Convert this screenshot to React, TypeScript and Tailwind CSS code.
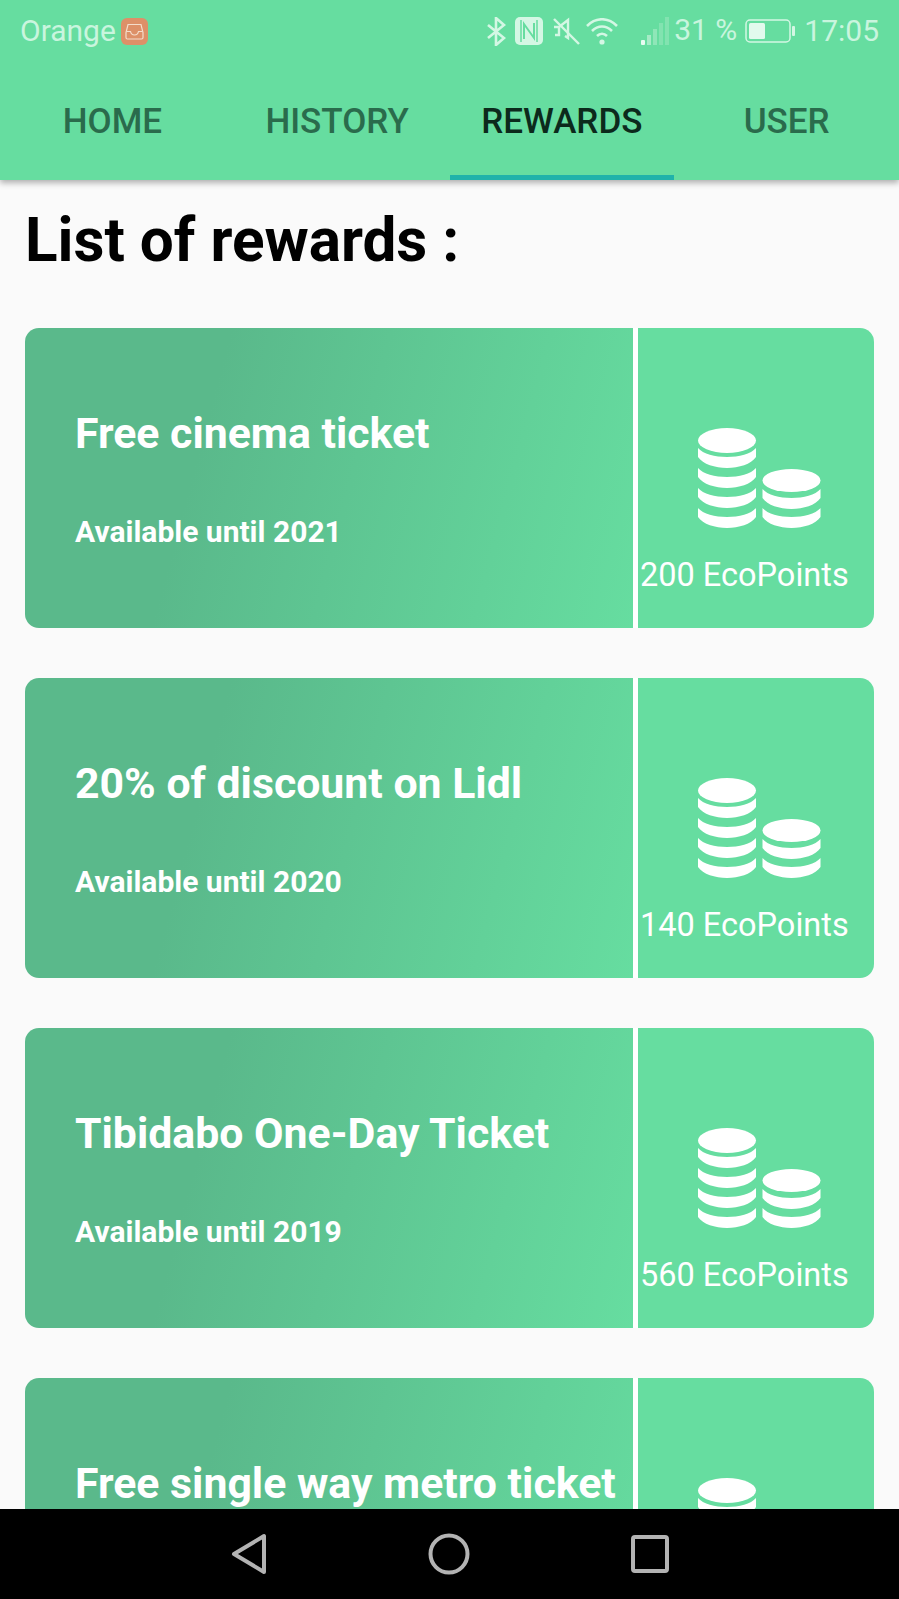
type Reward = { title: string; until?: string; points?: string };

const rewards: Reward[] = [
  { title: "Free cinema ticket", until: "Available until 2021", points: "200 EcoPoints" },
  { title: "20% of discount on Lidl", until: "Available until 2020", points: "140 EcoPoints" },
  { title: "Tibidabo One-Day Ticket", until: "Available until 2019", points: "560 EcoPoints" },
  { title: "Free single way metro ticket" },
];

const tabs = ["HOME", "HISTORY", "REWARDS", "USER"];

function Coins() {
  const stack = (x: number, cy: number, ry: number, bands: number[]) => (
    <g>
      <ellipse cx={x + 29} cy={cy} rx={29} ry={ry} fill="white" />
      {bands.map((y) => (
        <path
          key={y}
          d={`M${x} ${y} C${x + 10} ${y + 12} ${x + 48} ${y + 12} ${x + 58} ${y} V${y + 9} C${x + 48} ${y + 23.500} ${x + 10} ${y + 23.500} ${x} ${y + 9} Z`}
          fill="white"
        />
      ))}
    </g>
  );
  return (
    <svg width="123" height="101" viewBox="0 0 123 101" className="block ml-[6px]" style={{ filter: "blur(0.7px)" }}>
      {stack(0, 12.5, 12.5, [20, 40, 60, 80])}
      {stack(64.5, 52.5, 11.5, [61, 80])}
    </svg>
  );
}

function StatusBar() {
  return (
    <div className="h-[62px] flex items-center justify-between pl-[20px] pr-[20px] text-[30px] text-[#c9f5de] font-['Roboto',sans-serif]">
      <div className="flex items-center gap-[5px]">
        <span className="leading-none">Orange</span>
        <div className="w-[27px] h-[27px] rounded-[6px] bg-[#dd9068] flex items-center justify-center">
          <svg width="19" height="17" viewBox="0 0 19 17" fill="none" stroke="#f4dccb" strokeWidth="1.2">
            <path d="M3 1.5h13l2 8v5a1.5 1.5 0 0 1-1.5 1.5h-14A1.5 1.5 0 0 1 1 14.500v-5z" />
            <path d="M1.500 8.500h4c.5 2.500 2 3.500 4 3.500s3.500-1 4-3.500h4" />
          </svg>
        </div>
      </div>
      <div className="flex items-center">
        <svg width="19" height="29" viewBox="0 0 19 29" fill="none" stroke="#d4f7e4" strokeWidth="2.600" className="mr-[9px]">
          <path d="M1 8l16 13-8 7V1l8 7L1 21" />
        </svg>
        <svg width="28" height="28" viewBox="0 0 28 28" className="mr-[9px]">
          <rect width="28" height="28" rx="5" fill="#d4f7e4" />
          <path d="M9 22V7l10 14V6" fill="none" stroke="#66dda0" strokeWidth="2" />
          <path d="M6 3v22M22 3v22" stroke="#66dda0" strokeWidth="1.500" />
        </svg>
        <svg width="28" height="28" viewBox="0 0 28 28" fill="none" stroke="#d4f7e4" strokeWidth="2.400" className="mr-[6px]">
          <path d="M2 10h5l9-7v18l-3-2M7 10v8H3" />
          <path d="M2 2l25 25" />
        </svg>
        <svg width="32" height="27" viewBox="0 0 32 27" fill="none" stroke="#d4f7e4" strokeWidth="2.600" className="mr-[23px]">
          <path d="M1 8c9-9 21-9 30 0M6 13c6-6 14-6 20 0M11 18c3-3 7-3 10 0" />
          <circle cx="16" cy="24" r="2.600" fill="#d4f7e4" stroke="none" />
        </svg>
        <svg width="29" height="28" viewBox="0 0 29 28" className="mr-[4px]">
          <rect x="0" y="23" width="4" height="5" rx="1" fill="#e8fbf1" />
          <rect x="6" y="18" width="4" height="10" fill="#a6ebc6" />
          <rect x="12" y="12" width="4" height="16" fill="#8fe6b8" />
          <rect x="18" y="6" width="4" height="22" fill="#82e3b0" />
          <rect x="24" y="0" width="4" height="28" fill="#82e3b0" />
        </svg>
        <span className="leading-none mr-[8px] -translate-y-[1px]">31 %</span>
        <svg width="50" height="24" viewBox="0 0 50 24" className="mr-[9px]">
          <rect x="1" y="1" width="44" height="22" rx="4" fill="none" stroke="#d4f7e4" strokeWidth="1.500" />
          <rect x="4" y="4" width="16" height="16" rx="1.500" fill="#e2faed" />
          <rect x="47" y="7" width="3" height="10" rx="1" fill="#d4f7e4" />
        </svg>
        <span className="leading-none">17:05</span>
      </div>
    </div>
  );
}

function Header() {
  return (
    <header className="relative z-10 h-[180px] shrink-0 bg-[#66dda0] shadow-[0_3px_6px_rgba(0,0,0,0.3)]">
      <StatusBar />
      <nav className="grid grid-cols-4 h-[118px] font-['Roboto',sans-serif]">
        {tabs.map((tab) => {
          const active = tab === "REWARDS";
          return (
            <div
              key={tab}
              className={`flex items-center justify-center pt-[8px] border-b-[5px] text-[35px] font-medium ${
                active ? "border-[#20b2aa] text-[#0c2a1c]" : "border-transparent text-[#2a6b4c]"
              }`}
            >
              {tab}
            </div>
          );
        })}
      </nav>
    </header>
  );
}

function RewardCard({ title, until, points }: Reward) {
  return (
    <div className="flex h-[300px] shrink-0 rounded-[14px] overflow-hidden">
      <div className="w-[608px] pl-[50px] pt-[80px] bg-[linear-gradient(105deg,#5ab98b_30%,#66dda0_100%)] text-white">
        <div className="text-[42.800px] leading-[50px] font-bold whitespace-nowrap">{title}</div>
        {until && <div className="mt-[48px] text-[30px] leading-[52px] font-bold whitespace-nowrap">{until}</div>}
      </div>
      <div className="w-[5px] bg-white" />
      <div className="flex-1 bg-[#66dda0] pt-[100px] pl-[2px] text-white">
        <div className="pl-[52px]">
          <Coins />
        </div>
        {points && <div className="mt-[24px] text-[32.500px] leading-[44px] whitespace-nowrap">{points}</div>}
      </div>
    </div>
  );
}

function NavBar() {
  return (
    <footer className="h-[90px] shrink-0 bg-black flex items-center justify-center gap-[161px]">
      <svg width="36" height="42" viewBox="0 0 36 42" fill="none" stroke="#b3b3b3" strokeWidth="4" strokeLinejoin="round">
        <path d="M33 3v36L3 21z" />
      </svg>
      <svg width="42" height="42" viewBox="0 0 42 42" fill="none" stroke="#b3b3b3" strokeWidth="4">
        <circle cx="21" cy="21" r="18.500" />
      </svg>
      <svg width="38" height="38" viewBox="0 0 38 38" fill="none" stroke="#b3b3b3" strokeWidth="4" strokeLinejoin="round">
        <rect x="2" y="2" width="34" height="34" rx="2" />
      </svg>
    </footer>
  );
}

export default function App() {
  return (
    <div className="w-[899px] h-[1599px] flex flex-col overflow-hidden bg-[#fafafa] font-['Roboto',sans-serif]">
      <Header />
      <main className="flex-1 min-h-0 overflow-hidden px-[25px] pt-[25px]">
        <h1 className="text-[60.250px] leading-[72px] font-bold text-black whitespace-nowrap">List of rewards :</h1>
        <div className="mt-[51px] flex flex-col gap-[50px]">
          {rewards.map((r) => (
            <RewardCard key={r.title} {...r} />
          ))}
        </div>
      </main>
      <NavBar />
    </div>
  );
}
